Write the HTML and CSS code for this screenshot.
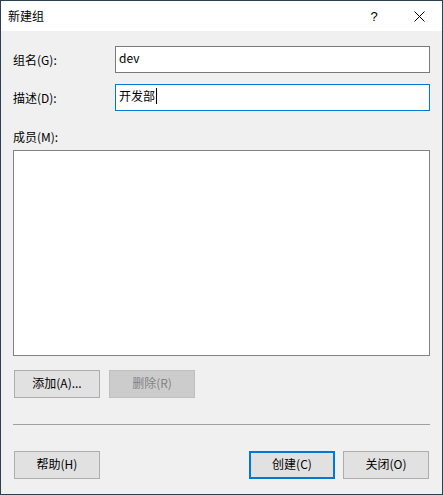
FILE: index.html
```
<!DOCTYPE html>
<html lang="zh-CN">
<head>
<meta charset="utf-8">
<title>新建组</title>
<link rel="stylesheet" href="styles.css">
</head>
<body>
<div class="window">
  <div class="titlebar">
    <div class="title">新建组</div>
    <div class="cap-btn help">?</div>
    <div class="cap-btn close">
      <svg width="11" height="11" viewBox="0 0 11 11"><path d="M0.5 0.5 L10.5 10.5 M10.5 0.5 L0.5 10.5" stroke="#000" stroke-width="1" fill="none"/></svg>
    </div>
  </div>
  <div class="content">
    <div class="field-row">
      <div class="label">组名(G):</div>
      <div class="textbox">dev</div>
    </div>
    <div class="field-row second">
      <div class="label">描述(D):</div>
      <div class="textbox focused">开发部<span class="caret"></span></div>
    </div>
    <div class="label members-label">成员(M):</div>
    <div class="listbox"></div>
    <div class="btn-row">
      <button class="btn">添加(A)...</button>
      <button class="btn disabled">删除(R)</button>
    </div>
    <div class="separator"></div>
    <div class="btn-row footer">
      <button class="btn">帮助(H)</button>
      <div class="spacer"></div>
      <button class="btn default">创建(C)</button>
      <button class="btn">关闭(O)</button>
    </div>
  </div>
</div>
</body>
</html>
```
FILE: styles.css
```
html, body {
  margin: 0;
  padding: 0;
  background: #f0f0f0;
}
body {
  font-family: "Noto Sans CJK SC", "Noto Sans", sans-serif;
  font-size: 12px;
  color: #000;
}
.window {
  width: 443px;
  height: 495px;
  box-sizing: border-box;
  border: 1px solid #2b3f55;
  background: #f0f0f0;
  display: flex;
  flex-direction: column;
}
.titlebar {
  height: 30px;
  background: #fff;
  display: flex;
  align-items: center;
}
.title {
  flex: 1;
  padding-left: 7px;
  line-height: 16px;
}
.cap-btn {
  width: 46px;
  height: 30px;
  display: flex;
  align-items: center;
  justify-content: center;
}
.help {
  font-family: "Liberation Sans", sans-serif;
  font-size: 13px;
  padding-left: 2px;
  box-sizing: border-box;
}
.close svg {
  display: block;
  margin-left: 1px;
}
.content {
  flex: 1;
  display: flex;
  flex-direction: column;
  padding: 15px 12px 0 12px;
}
.field-row {
  display: grid;
  grid-template-columns: 102px 1fr;
  align-items: center;
}
.field-row.second {
  margin-top: 11px;
}
.label {
  line-height: 16px;
  white-space: nowrap;
}
.textbox {
  height: 27px;
  box-sizing: border-box;
  border: 1px solid #7a7a7a;
  background: #fff;
  padding: 0 3px 3px 3px;
  display: flex;
  align-items: center;
  font-size: 12px;
  line-height: 16px;
}
.textbox.focused {
  border-color: #0078d7;
}
.caret {
  display: inline-block;
  width: 1px;
  height: 16px;
  background: #000;
  margin-left: 1px;
}
.members-label {
  margin-top: 18px;
}
.listbox {
  margin-top: 5px;
  height: 206px;
  box-sizing: border-box;
  border: 1px solid #828282;
  background: #fff;
}
.btn-row {
  display: flex;
  margin-top: 14px;
  padding-left: 1px;
  gap: 9px;
}
.btn-row.footer {
  margin-top: 26px;
  gap: 8px;
  padding-right: 1px;
}
.spacer {
  flex: 1;
}
.btn {
  width: 86px;
  height: 28px;
  box-sizing: border-box;
  border: 1px solid #adadad;
  background: #e1e1e1;
  font-family: "Noto Sans CJK SC", "Noto Sans", sans-serif;
  font-size: 12px;
  line-height: 16px;
  color: #000;
  padding: 0 0 2px 0;
  margin: 0;
}
.btn.disabled {
  background: #cccccc;
  border-color: #bfbfbf;
  color: #838383;
}
.btn.default {
  border: 2px solid #0078d7;
}
.separator {
  margin-top: 26px;
  height: 1px;
  background: #a0a0a0;
}
```
